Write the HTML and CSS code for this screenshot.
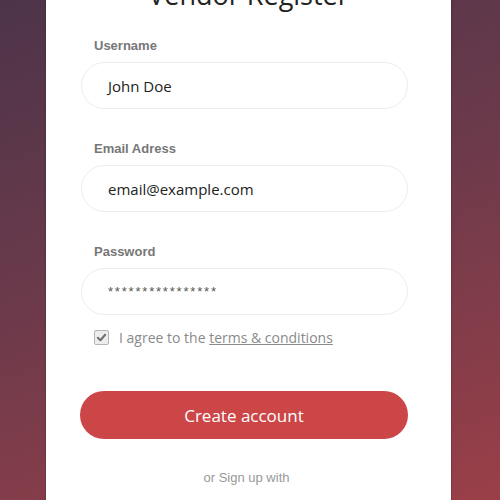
FILE: index.html
```html
<!DOCTYPE html>
<html>
<head>
<meta charset="utf-8">
<link rel="stylesheet" href="styles.css">
</head>
<body>
<div class="page">
  <div class="card">
    <h1 class="title">Vendor Register</h1>
    <form class="form">
      <div class="field">
        <label class="label">Username</label>
        <div class="input">John Doe</div>
      </div>
      <div class="field">
        <label class="label">Email Adress</label>
        <div class="input">email@example.com</div>
      </div>
      <div class="field">
        <label class="label">Password</label>
        <div class="input pass">****************</div>
      </div>
      <div class="agree">
        <span class="check"><svg viewBox="0 0 12 12" width="11" height="11"><path d="M2 6.3 L4.8 9 L10 3" fill="none" stroke="#6f6f6f" stroke-width="2.2" stroke-linecap="round" stroke-linejoin="round"/></svg></span>
        <span class="agree-text">I agree to the <span class="link">terms &amp; conditions</span></span>
      </div>
      <div class="btn">Create account</div>
      <div class="or">or Sign up with</div>
    </form>
  </div>
</div>
</body>
</html>
```
FILE: styles.css
```css
html, body {
  margin: 0;
  padding: 0;
  height: 100%;
  overflow: hidden;
}
body {
  background: linear-gradient(160deg, #4d3449 0%, #6b3a4b 45%, #9a3f48 100%);
}
.page {
  display: flex;
  justify-content: center;
}
.card {
  width: 405px;
  margin-left: -3px;
  margin-top: -24px;
  background: #fff;
  box-shadow: 0 0 2px rgba(0,0,0,0.35);
  padding-bottom: 40px;
}
.title {
  margin: 0;
  text-align: center;
  font-family: "Open Sans", sans-serif;
  font-weight: 400;
  font-size: 27px;
  line-height: 38px;
  color: #222;
}
.form {
  display: flex;
  flex-direction: column;
  padding: 24px 43px 0 35px;
}
.field {
  display: flex;
  flex-direction: column;
}
.label {
  font-family: "Liberation Sans", Arial, sans-serif;
  font-weight: 700;
  font-size: 13px;
  line-height: 15px;
  color: #777;
  padding-left: 13px;
  margin-bottom: 9px;
}
.input {
  height: 45px;
  border: 1px solid #ececec;
  border-radius: 24px;
  display: flex;
  align-items: center;
  padding-left: 26px;
  font-family: "Open Sans", sans-serif;
  font-size: 15px;
  color: #222;
  margin-bottom: 32px;
}
.input.pass {
  font-family: "Liberation Sans", Arial, sans-serif;
  font-size: 13px;
  color: #555;
  letter-spacing: 1.8px;
}
.field:nth-child(3) .input {
  margin-bottom: 0;
}
.field:nth-child(3) {
  margin-bottom: 13px;
}
.agree {
  display: flex;
  align-items: center;
  padding-left: 13px;
  gap: 10px;
}
.check {
  width: 15px;
  height: 15px;
  box-sizing: border-box;
  border: 1px solid #b5b5b5;
  border-radius: 2px;
  background: #ededed;
  display: flex;
  align-items: center;
  justify-content: center;
}
.agree-text {
  font-family: "Open Sans", sans-serif;
  font-size: 14px;
  color: #8a8a8a;
}
.link {
  text-decoration: underline;
}
.btn {
  margin-top: 44px;
  margin-left: -1px;
  height: 48px;
  border-radius: 24px;
  background: #cc4648;
  color: #fff;
  font-family: "Open Sans", sans-serif;
  font-size: 17px;
  display: flex;
  align-items: center;
  justify-content: center;
}
.or {
  margin-top: 31px;
  text-align: center;
  font-family: "Liberation Sans", Arial, sans-serif;
  font-size: 13px;
  color: #999;
  padding-left: 4px;
}
```
